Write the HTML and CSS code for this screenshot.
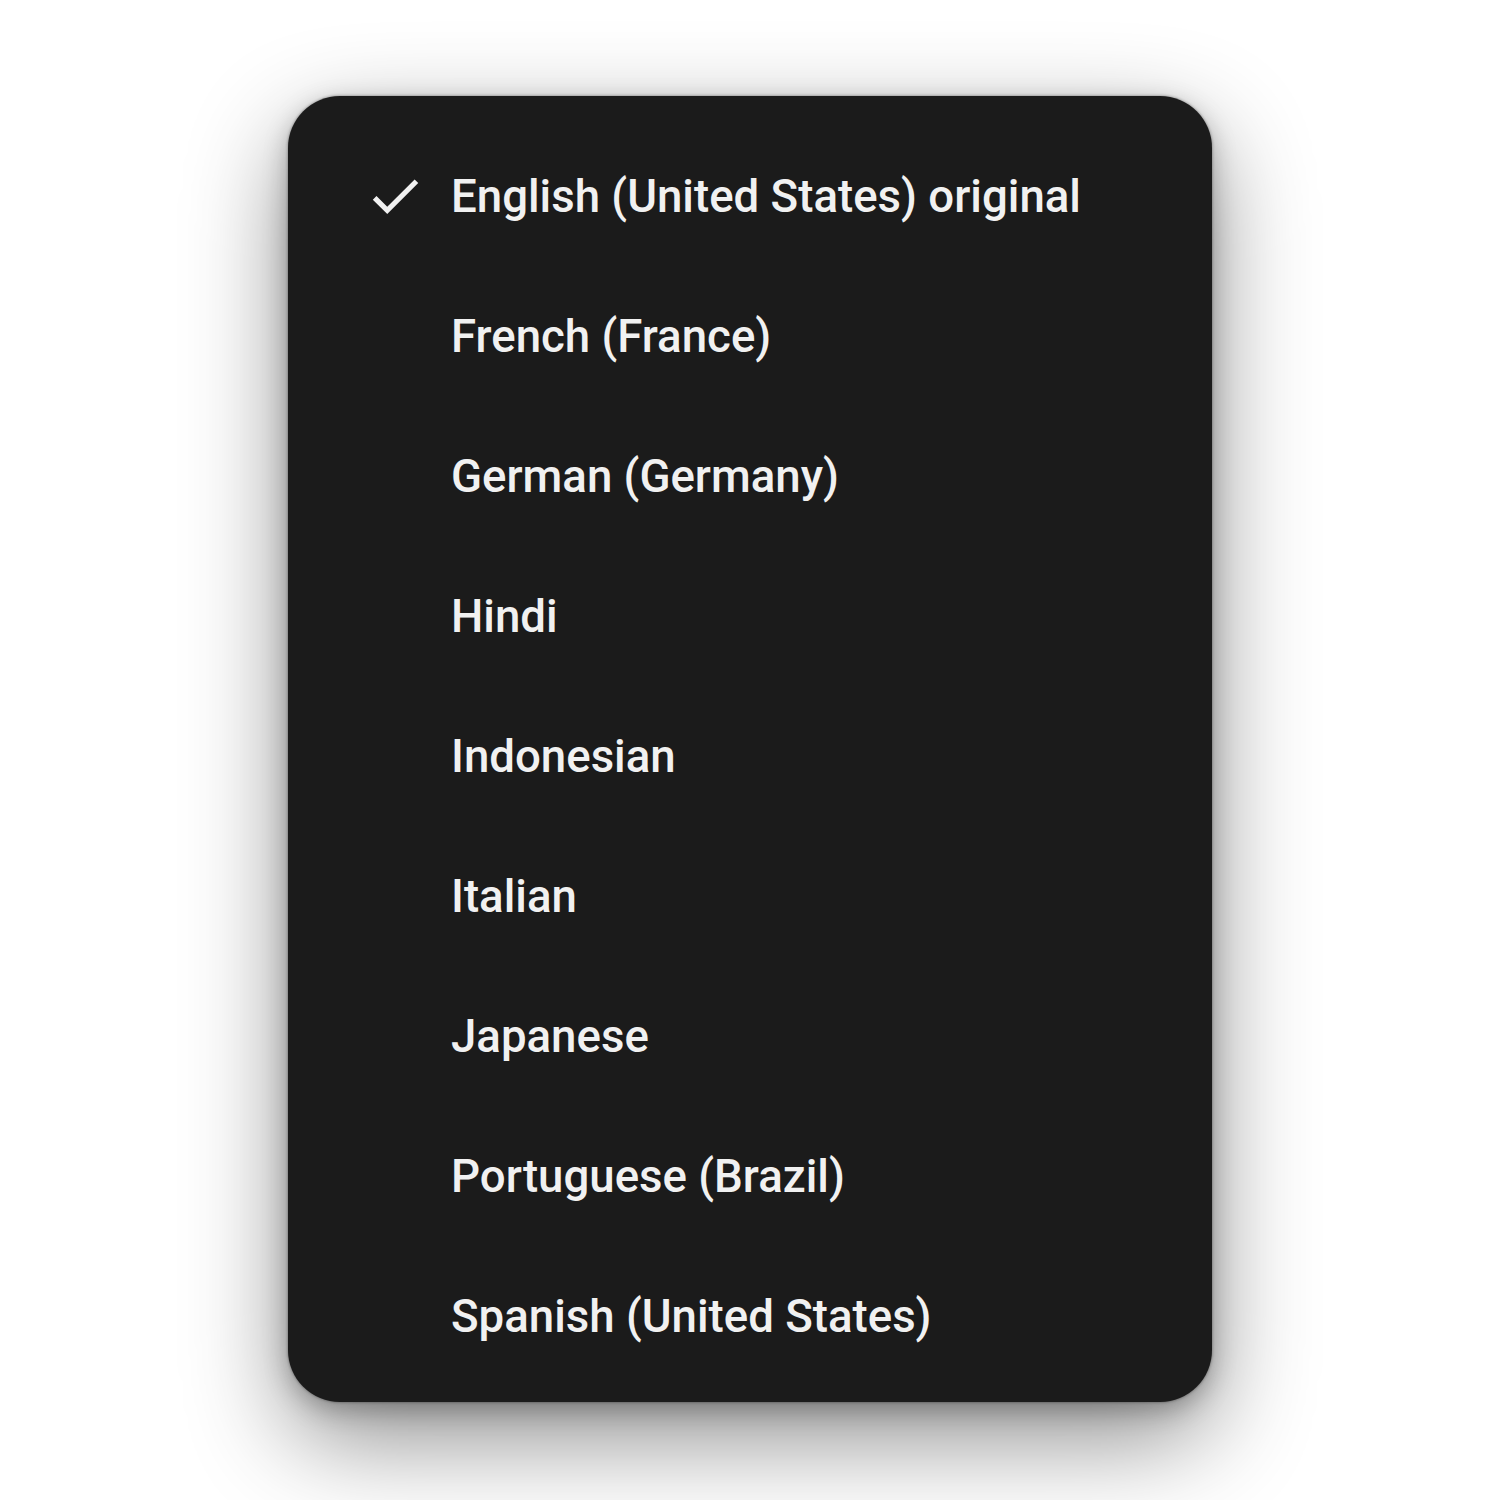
FILE: index.html
```html
<!DOCTYPE html>
<html lang="en">
<head>
    <meta charset="UTF-8">
    <title>Audio track</title>
    <link rel="stylesheet" href="styles.css">
</head>
<body>

<div class="menu">
    <div class="item selected">
        <span class="check">
            <svg viewBox="0 0 24 24" width="62" height="62"><path fill="currentColor" d="M9 16.17L4.83 12l-1.42 1.41L9 19 21 7l-1.41-1.41z"/></svg>
        </span>
        <span class="label">English (United States) original</span>
    </div>
    <div class="item"><span class="check"></span><span class="label">French (France)</span></div>
    <div class="item"><span class="check"></span><span class="label">German (Germany)</span></div>
    <div class="item"><span class="check"></span><span class="label">Hindi</span></div>
    <div class="item"><span class="check"></span><span class="label">Indonesian</span></div>
    <div class="item"><span class="check"></span><span class="label">Italian</span></div>
    <div class="item"><span class="check"></span><span class="label">Japanese</span></div>
    <div class="item"><span class="check"></span><span class="label">Portuguese (Brazil)</span></div>
    <div class="item"><span class="check"></span><span class="label">Spanish (United States)</span></div>
</div>

</body>
</html>
```

FILE: styles.css
```css
body {
    margin: 0;
    height: 1500px;
    background-color: #fff;
    font-family: Roboto, "Liberation Sans", sans-serif;
}
.menu {
    position: relative;
    top: 96px;
    left: 288px;
    width: 924px;
    height: 1306px;
    box-sizing: border-box;
    padding: 30px 0 16px;
    background-color: #1b1b1b;
    border-radius: 52px;
    box-shadow: 0 0 3px rgba(0, 0, 0, 0.45),
                0 8px 24px rgba(0, 0, 0, 0.25),
                0 36px 100px rgba(0, 0, 0, 0.45);
}
.item {
    height: 140px;
    display: flex;
    align-items: center;
    padding-left: 76px;
    color: #f1f1f1;
    cursor: pointer;
}
.check {
    width: 62px;
    height: 62px;
    margin-right: 25px;
    flex-shrink: 0;
}
.check svg {
    display: block;
}
.label {
    font-size: 45.6px;
    font-weight: 500;
}
```
